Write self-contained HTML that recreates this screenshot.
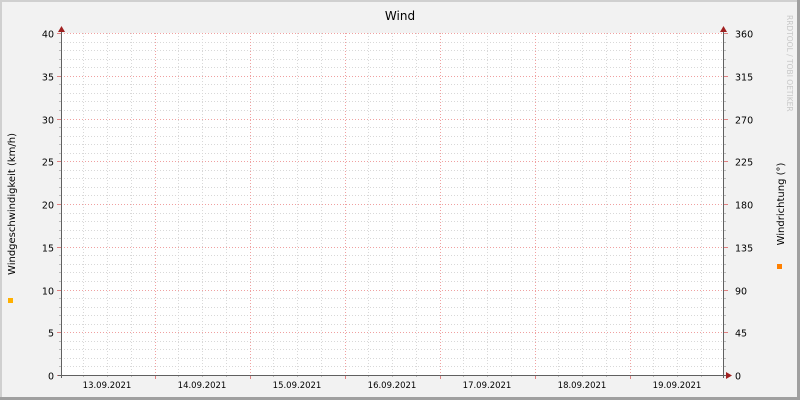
<!DOCTYPE html>
<html><head><meta charset="utf-8"><style>
html,body{margin:0;padding:0;background:#f2f2f2;}
svg{display:block;font-family:"DejaVu Sans","Liberation Sans",sans-serif;}
line{shape-rendering:crispEdges;}
</style></head><body>
<svg id="s" width="800" height="400" xmlns="http://www.w3.org/2000/svg">
<rect x="0" y="0" width="800" height="400" fill="#f2f2f2"/>
<rect x="0" y="0" width="800" height="2" fill="#d0d0d0"/>
<rect x="0" y="0" width="2" height="400" fill="#d0d0d0"/>
<rect x="0" y="397" width="800" height="3" fill="#a0a0a0"/>
<rect x="797" y="0" width="3" height="400" fill="#a0a0a0"/>
<rect x="61" y="33" width="663" height="342" fill="#ffffff"/>
<g id="grid"></g>
<text x="400" y="20" font-size="12" text-anchor="middle" fill="#000">Wind</text>
<text transform="translate(15,204) rotate(-90)" font-size="10" text-anchor="middle" fill="#000">Windgeschwindigkeit (km/h)</text>
<text transform="translate(784,204) rotate(-90)" font-size="10" text-anchor="middle" fill="#000">Windrichtung (°)</text>
<text transform="translate(787,15) rotate(90)" font-size="7.5" fill="#c8c8c8">RRDTOOL / TOBI OETIKER</text>
<rect x="8" y="298" width="5" height="5" fill="#ffb000"/>
<rect x="777" y="264" width="5" height="5" fill="#ff8000"/>
</svg>
<script>
var g=document.getElementById('grid'),out='';
function L(x1,y1,x2,y2,c,d){out+='<line x1="'+x1+'" y1="'+y1+'" x2="'+x2+'" y2="'+y2+'" stroke="'+c+'" stroke-width="1"'+(d?' stroke-dasharray="1,2"':'')+'/>';}
function T(x,y,t,a,s){out+='<text x="'+x+'" y="'+y+'" font-size="'+(s||10)+'" text-anchor="'+a+'" fill="#000">'+t+'</text>';}
var days=['13.09.2021','14.09.2021','15.09.2021','16.09.2021','17.09.2021','18.09.2021','19.09.2021'];
for(var k=-4;k<=24;k++){var x=Math.round(154.5+k*23.75)+0.5;if(x<=62||x>=724)continue;
 if(k%4!=0){L(x,33,x,375,'#d8d8d8',true);L(x,375,x,377,'#bbb');}}
for(var i=0;i<=40;i++){var y=Math.round(375-i*8.55)+0.5;
 if(i%5!=0&&i<40){L(61,y,724,y,'#d8d8d8',true);L(59,y,61,y,'#bbb');L(724,y,726,y,'#bbb');}}
for(var k=-4;k<=24;k++){var x=Math.round(154.5+k*23.75)+0.5;if(x<=62||x>=724)continue;
 if(k%4==0){L(x,33,x,375,'#f0a0a0',true);L(x,375,x,379,'#e08080');}}
for(var i=0;i<=40;i+=5){var y=Math.round(375-i*8.55)+0.5;
 L(61,y,724,y,'#f0a0a0',true);L(57,y,61,y,'#e08080');L(724,y,728,y,'#e08080');
 T(54,y+4,i,'end',9.5);T(735,y+4,i*9,'start',9.5);}
for(var d=0;d<7;d++)T(107+d*95,388,days[d],'middle',8.5);
L(61.5,30,61.5,378,'#606060');L(723.5,30,723.5,378,'#606060');L(58,375.5,727,375.5,'#606060');
out+='<polygon points="58,32 65,32 61.5,26" fill="#a02020"/><polygon points="720,32 727,32 723.5,26" fill="#a02020"/>';
out+='<polygon points="726,372 726,379 732,375.5" fill="#a02020"/>';
g.innerHTML=out;
</script>
</body></html>
